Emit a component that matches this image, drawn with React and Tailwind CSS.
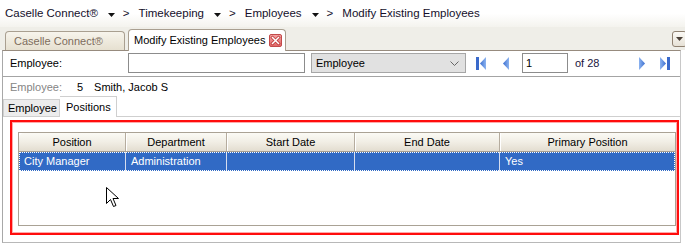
import React from 'react';

const font = "font-['Liberation_Sans',Arial,sans-serif]";

function Caret() {
  return (
    <svg width="7" height="4" viewBox="0 0 7 4" className="ml-[10px] mr-[8px] mt-[1px]">
      <path d="M0 0h7L3.5 4z" fill="#111" />
    </svg>
  );
}

function Crumb({ children }) {
  return <span className="whitespace-nowrap">{children}</span>;
}

function CloseBox() {
  return (
    <svg width="13" height="13" viewBox="0 0 13 13">
      <defs>
        <linearGradient id="cx" x1="0" y1="0" x2="0" y2="1">
          <stop offset="0" stopColor="#f3a3a3" />
          <stop offset="1" stopColor="#e06666" />
        </linearGradient>
      </defs>
      <rect x="0.5" y="0.5" width="12" height="12" rx="1.5" fill="url(#cx)" stroke="#c24a4a" />
      <path d="M3.5 3.5l6 6M9.5 3.5l-6 6" stroke="#b33" strokeWidth="3" strokeLinecap="square" />
      <path d="M3.5 3.5l6 6M9.5 3.5l-6 6" stroke="#fff" strokeWidth="1.5" strokeLinecap="square" />
    </svg>
  );
}

function NavIcon({ dir, bar }) {
  const left = dir === 'left';
  return (
    <svg width={bar ? 11 : 7} height="13" viewBox={`0 0 ${bar ? 11 : 7} 13`}>
      <defs>
        <linearGradient id={`nv${dir}${bar}`} x1="0" y1="0" x2="1" y2="0">
          <stop offset="0" stopColor={left ? '#3c6fd0' : '#8db4f0'} />
          <stop offset="1" stopColor={left ? '#8db4f0' : '#3c6fd0'} />
        </linearGradient>
      </defs>
      {bar && left && <rect x="0" y="0" width="3" height="13" fill="#3a6acb" />}
      {bar && !left && <rect x="8" y="0" width="3" height="13" fill="#3a6acb" />}
      {left ? (
        <path d={bar ? 'M4 6.5L10 0v13z' : 'M0 6.5L6 0v13z'} fill={`url(#nv${dir}${bar})`} />
      ) : (
        <path d="M1 0l6 6.5L1 13z" fill={`url(#nv${dir}${bar})`} />
      )}
    </svg>
  );
}

function Cursor() {
  return (
    <svg width="13" height="21" viewBox="0 0 13 21" className="absolute left-[87px] top-[54px]">
      <path d="M0.5 0.5v16l4-4 3 7 2.5-1-3-7h5.5z" fill="#fff" stroke="#000" strokeLinejoin="miter" />
    </svg>
  );
}

const columns = [
  { name: 'Position', w: 'w-[107px]' },
  { name: 'Department', w: 'w-[101px]' },
  { name: 'Start Date', w: 'w-[128px]' },
  { name: 'End Date', w: 'w-[145px]' },
  { name: 'Primary Position', w: 'flex-1' },
];

const row = ['City Manager', 'Administration', '', '', 'Yes'];

export default function App() {
  return (
    <div className={`${font} w-[685px] h-[245px] bg-white overflow-hidden text-[11px] text-black`}>
      {/* breadcrumb */}
      <div className="h-[27px] flex items-center pl-[5px] pt-[1px] text-[11.5px] text-[#140f2a] bg-gradient-to-b from-white via-white to-[#f4f3ee]">
        <Crumb>Caselle Connect®</Crumb>
        <Caret />
        <span>&gt;</span>
        <span className="ml-[9px]" />
        <Crumb>Timekeeping</Crumb>
        <Caret />
        <span>&gt;</span>
        <span className="ml-[9px]" />
        <Crumb>Employees</Crumb>
        <Caret />
        <span>&gt;</span>
        <span className="ml-[9px]" />
        <Crumb>Modify Existing Employees</Crumb>
      </div>

      {/* document tabs */}
      <div className="h-[23px] flex items-end pl-[5px] bg-[#efeee8] relative">
        <div className="h-[19px] w-[120px] flex items-center pl-[8px] border border-b-0 border-[#a99f90] rounded-t-[4px] bg-gradient-to-b from-[#f7f4ec] to-[#e6e0d0] text-[#7d6c5c]">
          Caselle Connect®
        </div>
        <div className="h-[22px] w-[158px] ml-[3px] -mb-px relative z-10 flex items-center pl-[5px] border border-b-0 border-[#a99f90] rounded-t-[4px] bg-white">
          <span>Modify Existing Employees</span>
          <span className="ml-auto mr-[3px] mt-[-1px]">
            <CloseBox />
          </span>
        </div>
        <div className="ml-auto mb-[3px] mr-[-2px] w-[15px] h-[16px] border border-[#8f8171] rounded-[3px] bg-gradient-to-b from-[#fbfaf6] to-[#e6e1d6] flex items-center justify-center">
          <svg width="7" height="4" viewBox="0 0 7 4">
            <path d="M0 0h7L3.5 4z" fill="#4a4038" />
          </svg>
        </div>
      </div>

      {/* panel */}
      <div className="ml-[2px] w-[679px] h-[193px] border border-t-[#978b7e] border-l-[#a8a8a8] border-r-[#c8c8c8] border-b-[#b8b8b8] bg-white">
        {/* lookup row */}
        <div className="h-[26px] flex items-start pt-[2px] pl-[7px] border-b border-[#a4a4a4]">
          <span className="w-[118px] leading-[20px]">Employee:</span>
          <div className="w-[177px] h-[20px] border border-[#8c8c8c] bg-white" />
          <div className="ml-[6px] w-[155px] h-[20px] border border-[#a6a6a6] bg-[#e1e1e1] flex items-center pl-[4px] pr-[6px]">
            <span>Employee</span>
            <svg width="9" height="5" viewBox="0 0 9 5" className="ml-auto">
              <path d="M0.5 0.5l4 4 4-4" fill="none" stroke="#666" />
            </svg>
          </div>
          <div className="ml-[10px] h-[20px] flex items-center">
            <NavIcon dir="left" bar />
          </div>
          <div className="ml-[16px] h-[20px] flex items-center">
            <NavIcon dir="left" />
          </div>
          <div className="ml-[12px] w-[46px] h-[20px] border border-[#8c8c8c] bg-white pl-[3px] leading-[18px]">1</div>
          <span className="ml-[7px] leading-[20px] text-[#1a1440]">of 28</span>
          <div className="ml-[39px] h-[20px] flex items-center">
            <NavIcon dir="right" />
          </div>
          <div className="ml-[14px] h-[20px] flex items-center">
            <NavIcon dir="right" bar />
          </div>
        </div>

        {/* selected employee */}
        <div className="h-[20px] flex items-center pl-[7px]">
          <span className="text-[#858585]">Employee:</span>
          <span className="ml-[15px]">5</span>
          <span className="ml-[11px]">Smith, Jacob S</span>
        </div>

        {/* sub tabs */}
        <div className="h-[20px] flex items-end border-b border-[#cfcfcf]">
          <div className="h-[17px] w-[57px] flex items-center pl-[4px] whitespace-nowrap border border-b-0 border-[#cfcfcf] bg-[#ececec]">
            Employee
          </div>
          <div className="h-[21px] w-[57px] -mb-px flex items-center pl-[6px] border border-b-0 border-l-0 border-[#cfcfcf] bg-white">
            Positions
          </div>
        </div>

        {/* positions grid, highlighted */}
        <div className="pt-[3px] pl-[7px]">
          <div className="w-[669px] h-[115px] border-2 border-[#ff0d0d] shadow-[inset_0_0_0_1px_#ffaaaa] pl-[6px] pt-[10px] pr-[1px]">
            <div className="relative w-[658px] h-[94px] border border-[#aaa295] bg-white">
              <div className="h-[19px] flex border-b border-[#a89f91] rounded-tl-[5px] rounded-tr-[5px] bg-gradient-to-b from-[#fbfaf5] via-[#f1eee5] to-[#e3ddd0]">
                {columns.map((c, i) => (
                  <div
                    key={c.name}
                    className={`${c.w} flex items-center justify-center ${
                      i < columns.length - 1 ? 'border-r border-[#b5ac9e] shadow-[1px_0_0_#ffffff]' : ''
                    }`}
                  >
                    {c.name}
                  </div>
                ))}
              </div>
              <div className="h-[19px] flex bg-[#316ac5] text-white outline-1 outline-dotted outline-white -outline-offset-1">
                {row.map((v, i) => (
                  <div
                    key={i}
                    className={`${columns[i].w} flex items-center pl-[5px] ${
                      i < row.length - 1 ? 'border-r border-[#d5ddef]' : ''
                    }`}
                  >
                    {v}
                  </div>
                ))}
              </div>
              <Cursor />
            </div>
          </div>
        </div>
      </div>
    </div>
  );
}
